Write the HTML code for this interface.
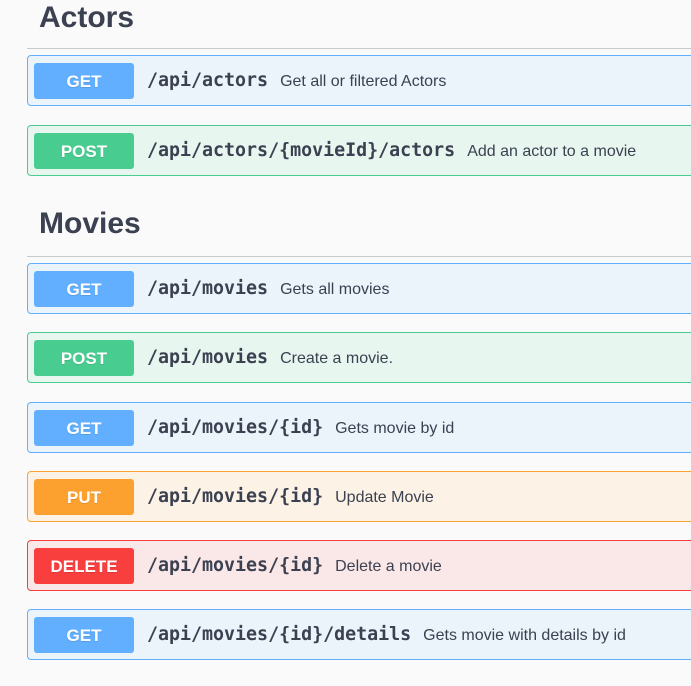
<!DOCTYPE html>
<html><head><meta charset="utf-8"><style>
body{margin:0;background:#fafafa;font-family:"Liberation Sans",Arial,sans-serif;color:#3b4151;width:691px;height:686px;overflow:hidden;position:relative}
h2{position:absolute;left:39px;margin:0;font-size:30px;font-weight:bold;color:#3b4151}
.line{position:absolute;left:27px;right:0;height:1px;background:#c8c9cd}
.op{position:absolute;left:27px;width:680px;height:49px;border:1px solid;border-radius:4px;box-sizing:content-box}
.b{position:absolute;left:6px;top:7px;width:100px;height:36px;border-radius:3px;color:#fff;font-weight:bold;font-size:17px;text-align:center;line-height:37px;text-shadow:0 1px 0 rgba(0,0,0,.1)}
.p{position:absolute;left:119px;top:0;line-height:50px;font-family:"DejaVu Sans Mono","Liberation Mono",monospace;font-weight:bold;font-size:18.3px;color:#3b4151;white-space:nowrap}
.p span{font-family:"Liberation Sans",Arial,sans-serif;font-weight:normal;font-size:16px;margin-left:12px}
.get{background:#ebf3fb;border-color:#61affe}.get .b{background:#61affe}
.post{background:#e8f6f0;border-color:#49cc90}.post .b{background:#49cc90}
.put{background:#fcf2e6;border-color:#fca130}.put .b{background:#fca130}
.del{background:#fae7e7;border-color:#f93e3e}.del .b{background:#f93e3e}
</style></head><body>
<h2 style="top:1px">Actors</h2>
<div class="line" style="top:48px"></div>
<div class="op get" style="top:55px"><div class="b">GET</div><div class="p">/api/actors<span>Get all or filtered Actors</span></div></div>
<div class="op post" style="top:125px"><div class="b">POST</div><div class="p">/api/actors/{movieId}/actors<span>Add an actor to a movie</span></div></div>
<h2 style="top:207px">Movies</h2>
<div class="line" style="top:256px"></div>
<div class="op get" style="top:263px"><div class="b">GET</div><div class="p">/api/movies<span>Gets all movies</span></div></div>
<div class="op post" style="top:332px"><div class="b">POST</div><div class="p">/api/movies<span>Create a movie.</span></div></div>
<div class="op get" style="top:402px"><div class="b">GET</div><div class="p">/api/movies/{id}<span>Gets movie by id</span></div></div>
<div class="op put" style="top:471px"><div class="b">PUT</div><div class="p">/api/movies/{id}<span>Update Movie</span></div></div>
<div class="op del" style="top:540px"><div class="b">DELETE</div><div class="p">/api/movies/{id}<span>Delete a movie</span></div></div>
<div class="op get" style="top:609px"><div class="b">GET</div><div class="p">/api/movies/{id}/details<span>Gets movie with details by id</span></div></div>
</body></html>
